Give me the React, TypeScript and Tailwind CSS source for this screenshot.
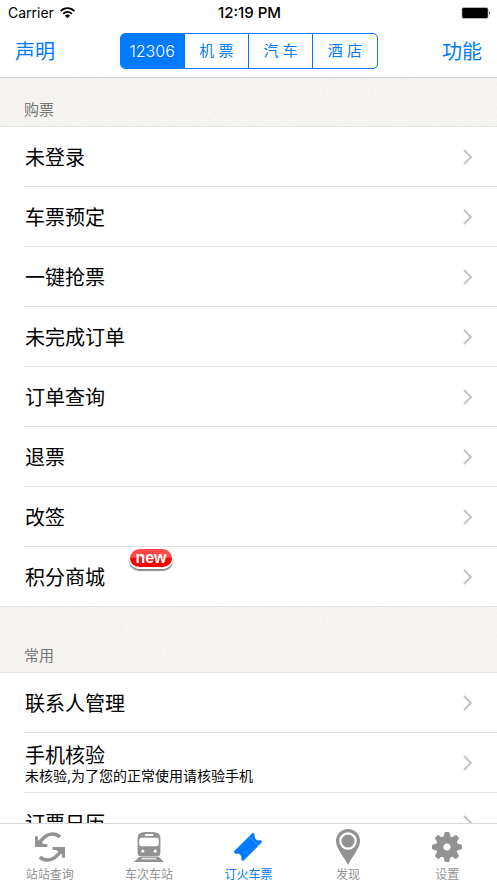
import { useState, type ReactNode } from "react";

const segments = ["12306", "机 票", "汽 车", "酒 店"];

type Item = { title: string; note?: string; badge?: string };

const ticketItems: Item[] = [
  { title: "未登录" },
  { title: "车票预定" },
  { title: "一键抢票" },
  { title: "未完成订单" },
  { title: "订单查询" },
  { title: "退票" },
  { title: "改签" },
  { title: "积分商城", badge: "new" },
];

const commonItems: Item[] = [
  { title: "联系人管理" },
  { title: "手机核验", note: "未核验,为了您的正常使用请核验手机" },
  { title: "订票日历" },
];

function WifiIcon() {
  return (
    <svg viewBox="0 0 45 36" className="h-3 w-[15px]" fill="none" stroke="#000" strokeWidth="5" aria-hidden="true">
      <path d="M2 12.500C13 .5 32 .5 43 12.500" />
      <path d="M9.500 20.500C16.500 12.500 28.500 12.500 35.500 20.500" />
      <path d="M22.500 34L14.500 26C19 21.500 26 21.500 30.500 26Z" fill="#000" stroke="none" />
    </svg>
  );
}

function BatteryIcon() {
  return (
    <svg viewBox="0 0 88 36" className="h-3 w-[30px]" aria-hidden="true">
      <rect x="1" y="1" width="80" height="34" rx="6" fill="#999" />
      <rect x="3" y="3" width="76" height="30" rx="4" fill="#000" />
      <path d="M83 12q5 6 0 12z" fill="#000" />
    </svg>
  );
}

function Chevron() {
  return (
    <svg viewBox="0 0 10 16" className="h-4 w-[10px] shrink-0" fill="none" stroke="#c4c4c9" strokeWidth="2" aria-hidden="true">
      <path d="M1 1L8 8L1 15" />
    </svg>
  );
}

function SyncIcon() {
  return (
    <svg viewBox="0 0 92 92" className="size-[30px]" fill="currentColor" aria-hidden="true">
      <g id="sync-half">
        <path d="M0 13H9V24L27 37H38V46H0Z" />
        <path d="M10 38C22 19 36 6 53 6C63 6 70 9 77 15" fill="none" stroke="currentColor" strokeWidth="11" />
      </g>
      <use href="#sync-half" transform="rotate(180 46 46)" />
    </svg>
  );
}

function TrainIcon() {
  return (
    <svg viewBox="0 0 92 92" className="size-[30px]" aria-hidden="true">
      <path
        fill="currentColor"
        fillRule="evenodd"
        d="M22 2Q46-3 70 2Q80 4 81 18V64Q81 75 70 75H22Q11 75 11 64V18Q12 4 22 2ZM35 6Q33 6 33 9T35 12H57Q59 12 59 9T57 6ZM23 18Q16 18 16 25V37Q16 44 23 44H69Q76 44 76 37V25Q76 18 69 18ZM27 54A5 5 0 1 0 27 64A5 5 0 1 0 27 54ZM65 54A5 5 0 1 0 65 64A5 5 0 1 0 65 54Z"
      />
      <path d="M16 77H76L92 92H0Z" fill="currentColor" />
      <path d="M25 79H67L71 84H21Z" fill="#e4e4e4" />
    </svg>
  );
}

function TicketIcon() {
  return (
    <svg viewBox="0 0 92 92" className="size-[30px]" aria-hidden="true">
      <g transform="rotate(-45 46 46)">
        <path
          fill="currentColor"
          d="M7 25H85Q88 25 88 28V34Q80 37 80 46T88 58V63Q88 66 85 66H7Q4 66 4 63V58Q12 55 12 46T4 34V28Q4 25 7 25Z"
        />
        <path d="M71 26V66" stroke="#fff" strokeWidth="2" strokeDasharray="3 3" />
      </g>
    </svg>
  );
}

function PinIcon() {
  return (
    <svg viewBox="0 0 72 108" className="h-9 w-6" aria-hidden="true">
      <path fill="currentColor" d="M36 0A36 36 0 0 1 72 36C72 58 50 80 36 108C22 80 0 58 0 36A36 36 0 0 1 36 0Z" />
      <circle cx="36" cy="36" r="23" fill="none" stroke="#fff" strokeWidth="7" />
    </svg>
  );
}

function GearIcon() {
  return (
    <svg viewBox="0 0 92 92" className="size-[30px]" fill="currentColor" aria-hidden="true">
      <circle cx="46" cy="46" r="33" />
      {[0, 45, 90, 135].map((angle) => (
        <path
          key={angle}
          transform={`rotate(${angle} 46 46)`}
          d="M42 0H50Q54 0 54 4Q54 14 62 20V72Q54 78 54 88Q54 92 50 92H42Q38 92 38 88Q38 78 30 72V20Q38 14 38 4Q38 0 42 0Z"
        />
      ))}
      <circle cx="46" cy="46" r="11" fill="#fff" />
    </svg>
  );
}

const tabs: { label: string; icon: ReactNode }[] = [
  { label: "站站查询", icon: <SyncIcon /> },
  { label: "车次车站", icon: <TrainIcon /> },
  { label: "订火车票", icon: <TicketIcon /> },
  { label: "发现", icon: <PinIcon /> },
  { label: "设置", icon: <GearIcon /> },
];

function SectionHeader({ title, grain, className }: { title: string; grain: string; className: string }) {
  return (
    <div className={`relative flex items-end border-b border-[#e4e4e4] bg-[#f5f4f0] px-6 ${className}`}>
      <svg className="absolute inset-0 size-full opacity-10" aria-hidden="true">
        <filter id={grain}>
          <feTurbulence type="fractalNoise" baseFrequency="0.35" numOctaves="2" />
          <feColorMatrix type="matrix" values="0 0 0 0 0.6  0 0 0 0 0.58  0 0 0 0 0.45  2.4 0 0 0 -1.1" />
        </filter>
        <rect width="100%" height="100%" filter={`url(#${grain})`} />
      </svg>
      <h2 className="relative text-[15px] leading-5 text-[#77777a]">{title}</h2>
    </div>
  );
}

function ItemList({ items }: { items: Item[] }) {
  return (
    <ul>
      {items.map((item, index) => (
        <li key={item.title} className={index === items.length - 1 ? "border-b border-[#e2e2e4]" : "pl-6"}>
          <button
            type="button"
            className={`flex w-full items-center justify-between pr-6 text-left ${
              index === items.length - 1 ? "h-[59px] pl-[25px]" : "h-[60px] border-b border-[#e2e2e4] pl-px"
            }`}
          >
            <span className="relative flex flex-col pt-0.5">
              <span className={`text-[20px] ${item.note ? "leading-6" : "leading-7"}`}>{item.title}</span>
              {item.note && <span className="text-[14px] leading-4">{item.note}</span>}
              {item.badge && (
                <span className="absolute -top-3.5 left-full ml-6 flex h-[21px] w-11 items-center justify-center rounded-full border border-b-2 border-white bg-linear-to-b from-[#ff4a4a] from-45% to-[#fa0000] to-50% font-['Liberation_Sans',Arial,sans-serif] text-[16px] leading-4 font-bold text-white shadow-[0_2px_1px_#888]">
                  {item.badge}
                </span>
              )}
            </span>
            <Chevron />
          </button>
        </li>
      ))}
    </ul>
  );
}

export default function App() {
  const [segment, setSegment] = useState(0);
  const [tab, setTab] = useState(2);

  return (
    <div className="flex h-screen flex-col overflow-hidden bg-white font-['Inter','Noto_Sans_CJK_SC',sans-serif] text-black">
      <header className="border-b border-[#d0d0d0]">
        <div className="grid h-[26px] grid-cols-3 items-center pr-1.5 pl-2 text-[14px] leading-5">
          <div className="flex items-center gap-1.5">
            <span>Carrier</span>
            <WifiIcon />
          </div>
          <time className="text-center text-[15px] font-medium">12:19 PM</time>
          <div className="flex justify-end">
            <BatteryIcon />
          </div>
        </div>
        <nav className="flex h-[51px] items-center justify-between px-[15px] text-[#007aff]">
          <button type="button" className="text-[20px] leading-7">声明</button>
          <div className="mb-px flex h-9 w-[258px] overflow-hidden rounded-[5px] border border-[#007aff]">
            {segments.map((label, index) => (
              <button
                key={label}
                type="button"
                aria-pressed={segment === index}
                onClick={() => setSegment(index)}
                className={`flex-1 border-[#007aff] leading-5 not-last:border-r ${
                  index === 0 ? "text-[16px] font-light" : "text-[15px]"
                } ${segment === index ? "bg-[#007aff] text-white" : ""}`}
              >
                {label}
              </button>
            ))}
          </div>
          <button type="button" className="text-[20px] leading-7">功能</button>
        </nav>
      </header>

      <main className="min-h-0 flex-1 overflow-hidden">
        <section>
          <SectionHeader title="购票" grain="grain-tickets" className="h-[49px] pb-1.5" />
          <ItemList items={ticketItems} />
        </section>
        <section>
          <SectionHeader title="常用" grain="grain-common" className="h-[66px] pb-1.5" />
          <ItemList items={commonItems} />
        </section>
      </main>

      <nav className="grid h-[60px] shrink-0 grid-cols-5 border-t border-[#d8d8da] bg-white">
        {tabs.map(({ label, icon }, index) => (
          <button
            key={label}
            type="button"
            aria-current={tab === index ? "page" : undefined}
            onClick={() => setTab(index)}
            className={`flex flex-col items-center pt-1 ${tab === index ? "text-[#007aff]" : "text-[#929292]"}`}
          >
            <span className="mb-px flex h-[37px] items-center">{icon}</span>
            <span className="text-[12px] leading-[18px]">{label}</span>
          </button>
        ))}
      </nav>
    </div>
  );
}
